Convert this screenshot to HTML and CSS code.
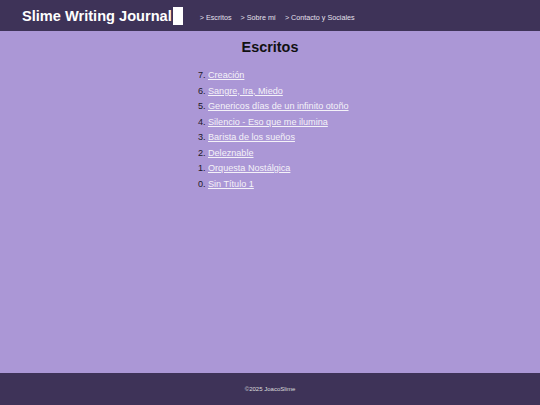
FILE: index.html
```html
<!DOCTYPE html>
<html lang="es">
<head>
<meta charset="utf-8">
<title>Slime Writing Journal</title>
<link rel="stylesheet" href="styles.css">
</head>
<body>
<header class="topbar">
  <div class="brand">Slime Writing Journal<span class="cursor"></span></div>
  <nav class="nav">
    <a href="#">&gt; Escritos</a>
    <a href="#">&gt; Sobre mí</a>
    <a href="#">&gt; Contacto y Sociales</a>
  </nav>
</header>
<main class="content">
  <h1 class="title">Escritos</h1>
  <ol class="list" reversed start="7">
    <li><a href="#">Creación</a></li>
    <li><a href="#">Sangre, Ira, Miedo</a></li>
    <li><a href="#">Genericos días de un infinito otoño</a></li>
    <li><a href="#">Silencio - Eso que me ilumina</a></li>
    <li><a href="#">Barista de los sueños</a></li>
    <li><a href="#">Deleznable</a></li>
    <li><a href="#">Orquesta Nostálgica</a></li>
    <li><a href="#">Sin Título 1</a></li>
  </ol>
</main>
<footer class="footer">©2025 JoacoSlime</footer>
</body>
</html>
```
FILE: styles.css
```css
html, body {
  margin: 0;
  padding: 0;
}
body {
  height: 405px;
  display: flex;
  flex-direction: column;
  background: #ab97d6;
  font-family: "Liberation Sans", Arial, sans-serif;
  color: #111;
}
.topbar {
  height: 31px;
  background: #3e3358;
  display: flex;
  align-items: center;
  padding-left: 22px;
  box-sizing: border-box;
}
.brand {
  color: #fff;
  font-weight: bold;
  font-size: 14.6px;
  display: flex;
  align-items: center;
}
.cursor {
  display: inline-block;
  width: 10px;
  height: 18px;
  background: #fff;
  margin-left: 1px;
}
.nav {
  display: flex;
  gap: 9px;
  margin-left: 17px;
  padding-top: 3px;
}
.nav a {
  color: #e4e0ec;
  text-decoration: none;
  font-size: 7.2px;
}
.content {
  flex: 1;
  display: flex;
  flex-direction: column;
  align-items: center;
}
.title {
  margin: 8px 0 0;
  font-size: 14.4px;
  font-weight: bold;
  line-height: 17px;
}
.list {
  margin: 12px 0 0;
  font-size: 9.1px;
  line-height: 15.5px;
  color: #1c1826;
  width: 332px;
  box-sizing: border-box;
  padding-left: 104px;
}
.list a {
  color: #f4f2f8;
}
.footer {
  height: 32px;
  background: #3e3358;
  color: #ddd;
  font-size: 6px;
  display: flex;
  align-items: center;
  justify-content: center;
}
```
